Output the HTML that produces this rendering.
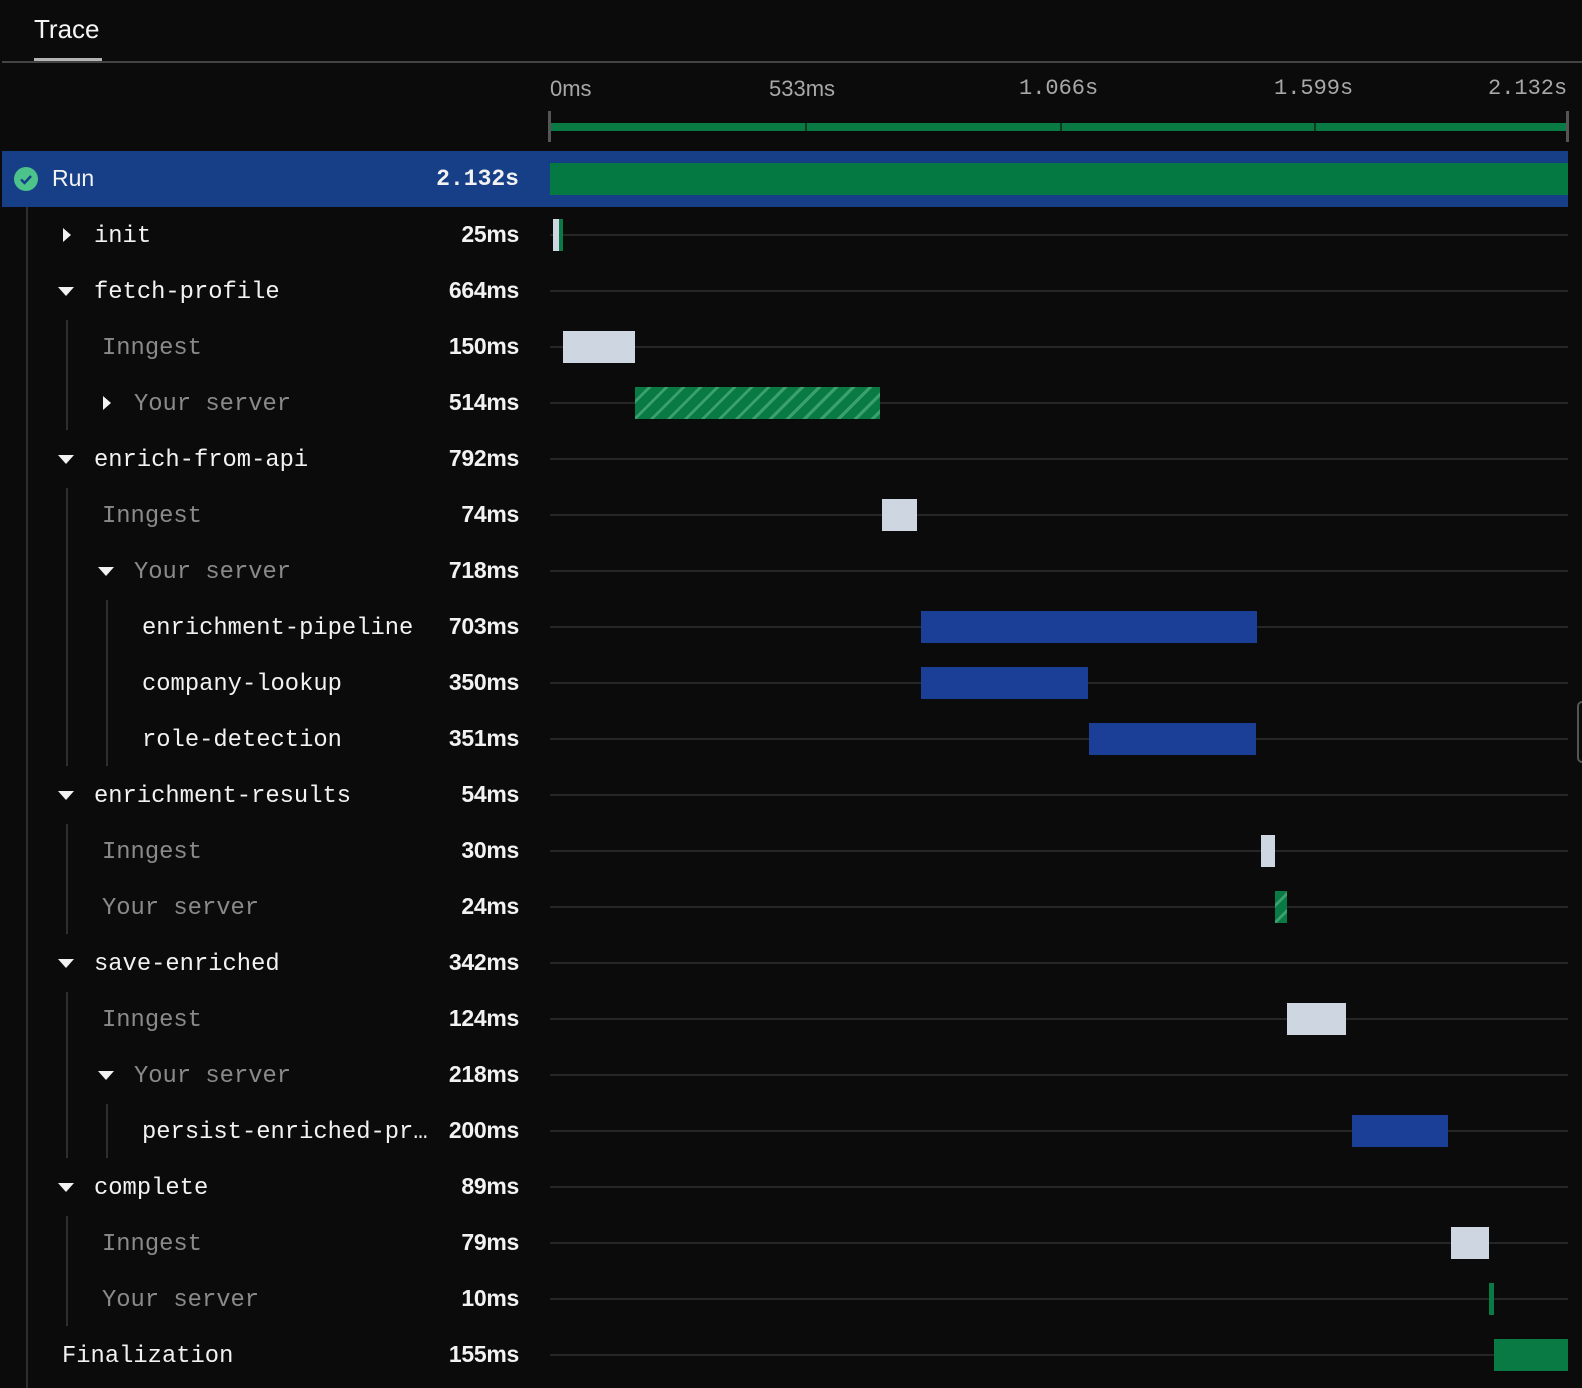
<!DOCTYPE html>
<html><head><meta charset="utf-8"><style>
*{margin:0;padding:0;box-sizing:border-box}
body{width:1582px;height:1388px;background:#0b0b0b;position:relative;overflow:hidden;font-family:"Liberation Sans",sans-serif;color:#f2f2f2}
.a{position:absolute}
.mono{font-family:"Liberation Mono",monospace;font-size:23.8px;white-space:nowrap}
.a.mono{margin-top:3px}
.dur{position:absolute;right:1063px;font-size:23px;font-weight:bold;white-space:nowrap;letter-spacing:-0.3px}
.dim{color:#8a8a8a}
.hl{position:absolute;left:550px;width:1018px;height:2px;background:#262626}
.bar{position:absolute;height:32px}
.g{background:#0a7a45}
.l{background:#cdd6e1}
.b{background:#1b3f96}
.h{background:repeating-linear-gradient(135deg,#0a7a45 0 9px,#3aa06e 9px 12px)}
.vl{position:absolute;width:2px;background:#2e2e2e}
.tri{position:absolute;width:0;height:0}
.down{border-left:8px solid transparent;border-right:8px solid transparent;border-top:9px solid #f2f2f2}
.right{border-top:7px solid transparent;border-bottom:7px solid transparent;border-left:8px solid #f2f2f2}
.tick{position:absolute;top:76px;font-size:22px;color:#a8a8a8}
</style></head><body>
<div class="a" style="left:34px;top:14px;font-size:26px;color:#f5f5f5">Trace</div>
<div class="a" style="left:34px;top:58px;width:68px;height:4px;background:#b3b3b3"></div>
<div class="a" style="left:2px;top:61px;width:1580px;height:2px;background:#444"></div>

<div class="tick" style="left:550px">0ms</div>
<div class="tick" style="left:769px">533ms</div>
<div class="tick mono" style="left:1019px;font-size:22px;color:#a8a8a8">1.066s</div>
<div class="tick mono" style="left:1274px;font-size:22px;color:#a8a8a8">1.599s</div>
<div class="tick mono" style="left:1488px;font-size:22px;color:#a8a8a8">2.132s</div>
<div class="a" style="left:550px;top:123px;width:1018px;height:8px;background:#0a7a45"></div>
<div class="a" style="left:805px;top:123px;width:2px;height:8px;background:#0b3b22"></div>
<div class="a" style="left:1060px;top:123px;width:2px;height:8px;background:#0b3b22"></div>
<div class="a" style="left:1314px;top:123px;width:2px;height:8px;background:#0b3b22"></div>
<div class="a" style="left:548px;top:111px;width:3px;height:31px;background:#555"></div>
<div class="a" style="left:1566px;top:111px;width:3px;height:31px;background:#555"></div>

<!-- Run row -->
<div class="a" style="left:2px;top:151px;width:1566px;height:56px;background:#163f87"></div>
<div class="a" style="left:14px;top:167px;width:24px;height:24px;border-radius:50%;background:#4cc38a"></div>
<svg class="a" style="left:14px;top:167px" width="24" height="24"><path d="M7 12.5l3.5 3.5 6.5-7" fill="none" stroke="#163f87" stroke-width="2.4"/></svg>
<div class="a" style="left:52px;top:165px;font-size:23px">Run</div>
<div class="dur mono" style="top:166px;font-size:23px;letter-spacing:0">2.132s</div>
<div class="bar" style="left:550px;top:163px;width:1018px;background:#047a42"></div>

<!-- vertical guides -->
<div class="vl" style="left:26px;top:207px;height:1181px"></div>
<div class="vl" style="left:66px;top:320px;height:110px"></div>
<div class="vl" style="left:66px;top:488px;height:278px"></div>
<div class="vl" style="left:106px;top:600px;height:166px"></div>
<div class="vl" style="left:66px;top:824px;height:110px"></div>
<div class="vl" style="left:66px;top:992px;height:166px"></div>
<div class="vl" style="left:106px;top:1104px;height:54px"></div>
<div class="vl" style="left:66px;top:1216px;height:110px"></div>

<div class="hl" style="top:234px"></div><div class="hl" style="top:290px"></div><div class="hl" style="top:346px"></div><div class="hl" style="top:402px"></div><div class="hl" style="top:458px"></div><div class="hl" style="top:514px"></div><div class="hl" style="top:570px"></div><div class="hl" style="top:626px"></div><div class="hl" style="top:682px"></div><div class="hl" style="top:738px"></div><div class="hl" style="top:794px"></div><div class="hl" style="top:850px"></div><div class="hl" style="top:906px"></div><div class="hl" style="top:962px"></div><div class="hl" style="top:1018px"></div><div class="hl" style="top:1074px"></div><div class="hl" style="top:1130px"></div><div class="hl" style="top:1186px"></div><div class="hl" style="top:1242px"></div><div class="hl" style="top:1298px"></div><div class="hl" style="top:1354px"></div>

<div class="tri right" style="left:63px;top:228px"></div>
<div class="a mono" style="left:94px;top:220px">init</div><div class="dur" style="top:221px">25ms</div>
<div class="bar l" style="left:553px;top:219px;width:6px"></div><div class="bar g" style="left:559px;top:219px;width:4px"></div>

<div class="tri down" style="left:58px;top:287px"></div>
<div class="a mono" style="left:94px;top:276px">fetch-profile</div><div class="dur" style="top:277px">664ms</div>

<div class="a mono dim" style="left:102px;top:332px">Inngest</div><div class="dur" style="top:333px">150ms</div>
<div class="bar l" style="left:563px;top:331px;width:72px"></div>

<div class="tri right" style="left:103px;top:396px"></div>
<div class="a mono dim" style="left:134px;top:388px">Your server</div><div class="dur" style="top:389px">514ms</div>
<div class="bar h" style="left:635px;top:387px;width:245px"></div>

<div class="tri down" style="left:58px;top:455px"></div>
<div class="a mono" style="left:94px;top:444px">enrich-from-api</div><div class="dur" style="top:445px">792ms</div>

<div class="a mono dim" style="left:102px;top:500px">Inngest</div><div class="dur" style="top:501px">74ms</div>
<div class="bar l" style="left:882px;top:499px;width:35px"></div>

<div class="tri down" style="left:98px;top:567px"></div>
<div class="a mono dim" style="left:134px;top:556px">Your server</div><div class="dur" style="top:557px">718ms</div>

<div class="a mono" style="left:142px;top:612px">enrichment-pipeline</div><div class="dur" style="top:613px">703ms</div>
<div class="bar b" style="left:921px;top:611px;width:336px"></div>

<div class="a mono" style="left:142px;top:668px">company-lookup</div><div class="dur" style="top:669px">350ms</div>
<div class="bar b" style="left:921px;top:667px;width:167px"></div>

<div class="a mono" style="left:142px;top:724px">role-detection</div><div class="dur" style="top:725px">351ms</div>
<div class="bar b" style="left:1089px;top:723px;width:167px"></div>

<div class="tri down" style="left:58px;top:791px"></div>
<div class="a mono" style="left:94px;top:780px">enrichment-results</div><div class="dur" style="top:781px">54ms</div>

<div class="a mono dim" style="left:102px;top:836px">Inngest</div><div class="dur" style="top:837px">30ms</div>
<div class="bar l" style="left:1261px;top:835px;width:14px"></div>

<div class="a mono dim" style="left:102px;top:892px">Your server</div><div class="dur" style="top:893px">24ms</div>
<div class="bar h" style="left:1275px;top:891px;width:12px"></div>

<div class="tri down" style="left:58px;top:959px"></div>
<div class="a mono" style="left:94px;top:948px">save-enriched</div><div class="dur" style="top:949px">342ms</div>

<div class="a mono dim" style="left:102px;top:1004px">Inngest</div><div class="dur" style="top:1005px">124ms</div>
<div class="bar l" style="left:1287px;top:1003px;width:59px"></div>

<div class="tri down" style="left:98px;top:1071px"></div>
<div class="a mono dim" style="left:134px;top:1060px">Your server</div><div class="dur" style="top:1061px">218ms</div>

<div class="a mono" style="left:142px;top:1116px">persist-enriched-pr…</div><div class="dur" style="top:1117px">200ms</div>
<div class="bar b" style="left:1352px;top:1115px;width:96px"></div>

<div class="tri down" style="left:58px;top:1183px"></div>
<div class="a mono" style="left:94px;top:1172px">complete</div><div class="dur" style="top:1173px">89ms</div>

<div class="a mono dim" style="left:102px;top:1228px">Inngest</div><div class="dur" style="top:1229px">79ms</div>
<div class="bar l" style="left:1451px;top:1227px;width:38px"></div>

<div class="a mono dim" style="left:102px;top:1284px">Your server</div><div class="dur" style="top:1285px">10ms</div>
<div class="bar g" style="left:1489px;top:1283px;width:5px"></div>

<div class="a mono" style="left:62px;top:1340px">Finalization</div><div class="dur" style="top:1341px">155ms</div>
<div class="bar g" style="left:1494px;top:1339px;width:74px"></div>

<div class="a" style="left:1577px;top:701px;width:10px;height:62px;border:2px solid #555;border-radius:6px"></div>
</body></html>
